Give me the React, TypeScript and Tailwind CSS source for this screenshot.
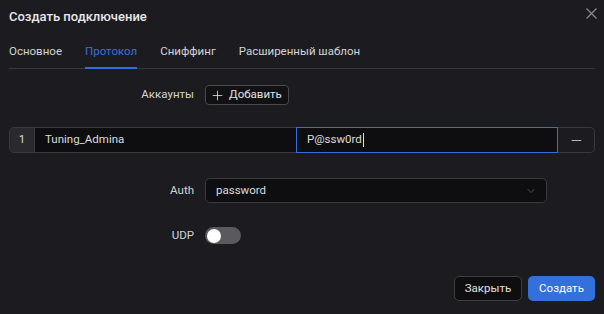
import { Plus, Minus, ChevronDown } from "lucide-react";

const tabs = ["Основное", "Протокол", "Сниффинг", "Расширенный шаблон"];

export default function App() {
  return (
    <div
      className="relative h-[314px] w-[604px] overflow-hidden bg-[#1c1b20] px-[9px] text-[11.5px] text-[#d4d4d6]"
      style={{ fontFamily: 'Roboto, "Liberation Sans", sans-serif' }}
    >
      {/* Header */}
      <div className="flex h-[34px] items-center">
        <h1 className="text-[13px] font-medium leading-[20px] text-[#e8e8ea]">Создать подключение</h1>
      </div>
      <button className="absolute left-[586px] top-[8px] text-[#8c8c90]">
        <svg width="11" height="11" viewBox="0 0 11 11" fill="none" stroke="currentColor" strokeWidth="1.2">
          <path d="M0.5 0.5 L10.5 10.5 M10.5 0.5 L0.5 10.5" />
        </svg>
      </button>

      {/* Tabs */}
      <div className="flex h-[35px] gap-[23px] border-b border-[#38383c] pt-[2px]">
        {tabs.map((t, i) => (
          <div
            key={t}
            className={`relative flex items-center ${i === 1 ? "text-[#3a72dc]" : "text-[#d4d4d6]"}`}
          >
            {t}
            {i === 1 && <span className="absolute bottom-[-1px] left-0 right-0 h-[2px] bg-[#2f6ee0]" />}
          </div>
        ))}
      </div>

      {/* Accounts */}
      <div className="mt-[16px] flex items-center gap-[11px]">
        <div className="w-[185px] text-right">Аккаунты</div>
        <button className="flex h-[20px] items-center gap-[4px] rounded-[4px] border border-[#4a4a4e] bg-[#111113] pl-[4px] pr-[6px] text-[#e0e0e2]">
          <Plus className="h-[15px] w-[15px]" strokeWidth={1.3} />
          Добавить
        </button>
      </div>

      <div className="mt-[22px] flex h-[26px]">
        <div className="flex w-[26px] items-center justify-center rounded-l-[5px] border border-[#3a3a3e] bg-[#2a2a2e] text-[#d8d8da]">
          1
        </div>
        <div className="flex w-[261px] items-center border-y border-[#3a3a3e] bg-[#0e0e10] pl-[10px] text-[#dcdcde]">
          Tuning_Admina
        </div>
        <div className="flex w-[262px] items-center border border-[#2f6ee0] bg-[#0e0e10] pl-[10px] text-[#dcdcde]">
          P@ssw0rd
          <span className="ml-[1px] h-[14px] w-px bg-[#e0e0e0]" />
        </div>
        <div className="flex flex-1 items-center justify-center rounded-r-[5px] border border-l-0 border-[#3a3a3e] bg-[#1c1b20]">
          <Minus className="h-[15px] w-[15px] text-[#e0e0e0]" strokeWidth={1.3} />
        </div>
      </div>

      {/* Auth */}
      <div className="mt-[25px] flex items-center gap-[11px]">
        <div className="w-[185px] text-right">Auth</div>
        <div className="flex h-[25px] w-[342px] items-center justify-between rounded-[5px] border border-[#3a3a3e] bg-[#0e0e10] pl-[10px] pr-[9px] text-[#dcdcde]">
          password
          <ChevronDown className="h-[12px] w-[12px] text-[#6c6c70]" strokeWidth={1.5} />
        </div>
      </div>

      {/* UDP */}
      <div className="mt-[24px] flex items-center gap-[11px]">
        <div className="w-[185px] text-right">UDP</div>
        <div className="flex h-[17px] w-[36px] items-center rounded-full bg-[#5a5a5e] px-[2px]">
          <span className="h-[14px] w-[14px] rounded-full bg-white" />
        </div>
      </div>

      {/* Footer */}
      <div className="mt-[32px] flex justify-end gap-[6px]">
        <button className="h-[25px] w-[68px] rounded-[5px] border border-[#3e3e42] bg-[#0e0e10] text-[#e0e0e2]">
          Закрыть
        </button>
        <button className="h-[25px] w-[67px] rounded-[5px] bg-[#3370dc] text-white">Создать</button>
      </div>
    </div>
  );
}
